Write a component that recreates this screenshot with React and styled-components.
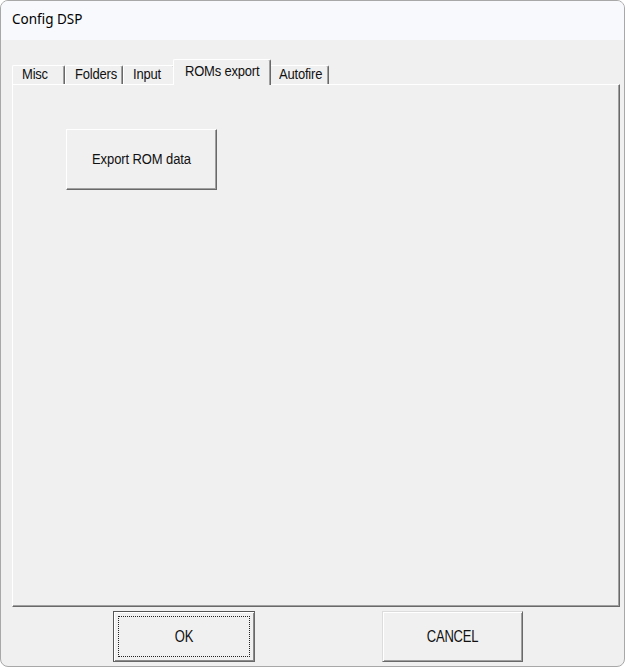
import React from "react";
import styled, { createGlobalStyle } from "styled-components";

const GlobalStyle = createGlobalStyle`
  html, body { margin: 0; padding: 0; background: #ffffff; }
  * { box-sizing: border-box; }
`;

const Window = styled.div`
  width: 625px;
  height: 667px;
  border: 1px solid #a8a8a8;
  border-radius: 8px;
  overflow: hidden;
  display: flex;
  flex-direction: column;
  background: #f0f0f0;
`;

const TitleBar = styled.div`
  height: 39px;
  flex: none;
  background: #f7f9fc;
  display: flex;
  align-items: center;
  padding-left: 11px;
  padding-bottom: 3px;
  font-family: "Noto Sans", "Open Sans", sans-serif;
  font-size: 13.5px;
  color: #000;
`;

const Content = styled.div`
  flex: 1;
  display: flex;
  flex-direction: column;
  padding: 19px 4px 4px 11px;
  font-family: "Liberation Sans", Arial, sans-serif;
  font-size: 13px;
  color: #000;
`;

const TabStrip = styled.div`
  height: 25px;
  flex: none;
  display: flex;
  align-items: flex-end;
`;

const Tab = styled.div`
  position: relative;
  flex: none;
  width: ${(p) => p.$w}px;
  height: ${(p) => (p.$active ? 26 : 19)}px;
  margin: ${(p) => (p.$active ? "0 -2px -1px -2px" : "0")};
  z-index: ${(p) => (p.$active ? 2 : 1)};
  background: #f0f0f0;
  border-top: 1px solid #ffffff;
  border-left: 1px solid #ffffff;
  border-right: 1px solid #696969;
  border-radius: 2px 2px 0 0;
  box-shadow: inset -1px 0 0 #a0a0a0;
  display: flex;
  align-items: flex-start;
  padding-left: ${(p) => (p.$active ? 11 : 9)}px;
  padding-top: ${(p) => (p.$active ? 4 : 1)}px;
  white-space: nowrap;
  line-height: 15px;
`;

const TextLabel = styled.span`
  display: inline-block;
  font-family: "Liberation Sans", Arial, sans-serif;
  font-size: 13px;
  letter-spacing: ${(p) => p.$ls || 0}px;
  transform: scaleY(${(p) => p.$sy || 1.1});
  transform-origin: center;
  color: #111;
`;

const Panel = styled.div`
  flex: 1;
  background: #f0f0f0;
  border-top: 1px solid #ffffff;
  border-left: 1px solid #ffffff;
  border-right: 1px solid #696969;
  border-bottom: 1px solid #696969;
  box-shadow: inset -1px -1px 0 #a0a0a0;
  padding: 44px 0 0 53px;
`;

const BevelButton = styled.div`
  width: ${(p) => p.$w}px;
  height: ${(p) => p.$h}px;
  background: #f0f0f0;
  border-top: 1px solid #ffffff;
  border-left: 1px solid #ffffff;
  border-right: 1px solid #696969;
  border-bottom: 1px solid #696969;
  box-shadow: inset -1px -1px 0 #a0a0a0;
  display: flex;
  align-items: center;
  justify-content: center;
`;

const ButtonRow = styled.div`
  flex: none;
  height: 51px;
  margin-top: 4px;
  display: flex;
  padding-left: 101px;
  gap: 127px;
`;

const DialogButton = styled.div`
  width: ${(p) => p.$w}px;
  height: 51px;
  background: #f0f0f0;
  border: 1px solid ${(p) => (p.$default ? "#555555" : "#dcdcdc")};
  border-right-color: #696969;
  border-bottom-color: #696969;
  box-shadow: ${(p) =>
    p.$default
      ? "inset 1px 1px 0 #ffffff, inset -1px -1px 0 #8a8a8a"
      : "inset 1px 1px 0 #ffffff, inset -1px -1px 0 #a0a0a0"};
  padding: 4px;
  display: flex;
`;

const FocusRing = styled.div`
  flex: 1;
  display: flex;
  align-items: center;
  justify-content: center;
  border: 1px dotted ${(p) => (p.$show ? "#222222" : "transparent")};
`;

const tabs = [
  { label: "Misc", w: 53 },
  { label: "Folders", w: 58 },
  { label: "Input", w: 52 },
  { label: "ROMs export", w: 98, active: true },
  { label: "Autofire", w: 60 },
];

export default function App() {
  return (
    <>
      <GlobalStyle />
      <Window>
        <TitleBar>Config DSP</TitleBar>
        <Content>
          <TabStrip>
            {tabs.map((t) => (
              <Tab key={t.label} $w={t.w} $active={t.active}>
                <TextLabel $ls={-0.2}>{t.label}</TextLabel>
              </Tab>
            ))}
          </TabStrip>
          <Panel>
            <BevelButton $w={151} $h={61}>
              <TextLabel $ls={-0.1}>Export ROM data</TextLabel>
            </BevelButton>
          </Panel>
          <ButtonRow>
            <DialogButton $w={142} $default>
              <FocusRing $show>
                <TextLabel $sy={1.25} $ls={-0.2}>OK</TextLabel>
              </FocusRing>
            </DialogButton>
            <DialogButton $w={141}>
              <FocusRing>
                <TextLabel $sy={1.25} $ls={-0.2}>CANCEL</TextLabel>
              </FocusRing>
            </DialogButton>
          </ButtonRow>
        </Content>
      </Window>
    </>
  );
}
